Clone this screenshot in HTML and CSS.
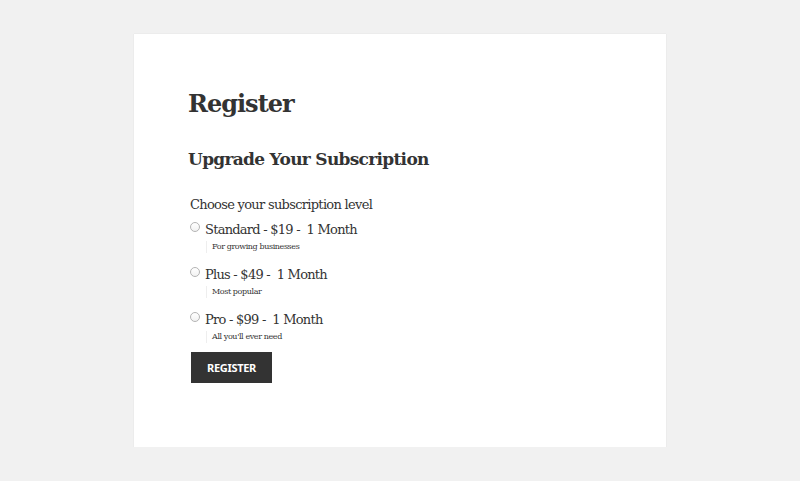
FILE: index.html
```html
<!DOCTYPE html>
<html>
<head>
<meta charset="utf-8">
<link rel="stylesheet" href="styles.css">
</head>
<body>
<main class="card">
  <h1 class="title">Register</h1>
  <h2 class="subtitle">Upgrade Your Subscription</h2>
  <form class="form">
    <p class="legend">Choose your subscription level</p>
    <div class="levels">
      <div class="level">
        <label class="option"><span class="radio"></span>Standard - $19 -&nbsp; 1 Month</label>
        <div class="desc">For growing businesses</div>
      </div>
      <div class="level">
        <label class="option"><span class="radio"></span>Plus - $49 -&nbsp; 1 Month</label>
        <div class="desc">Most popular</div>
      </div>
      <div class="level">
        <label class="option"><span class="radio"></span>Pro - $99 -&nbsp; 1 Month</label>
        <div class="desc">All you'll ever need</div>
      </div>
    </div>
    <button type="button" class="btn">Register</button>
  </form>
</main>
</body>
</html>
```
FILE: styles.css
```css
html, body {
  margin: 0;
  padding: 0;
  background: #f1f1f1;
}
body {
  font-family: "DejaVu Serif", "Liberation Serif", serif;
  color: #333;
  padding-top: 34px;
}
.card {
  width: 532px;
  height: 413px;
  box-sizing: border-box;
  margin: 0 auto;
  background: #fff;
  box-shadow: 0 0 1px rgba(0,0,0,0.12);
  padding: 55px 54px 0 54px;
}
.title {
  margin: 0;
  font-size: 24px;
  line-height: 30px;
  font-weight: bold;
  letter-spacing: -1px;
}
.subtitle {
  margin: 28px 0 0 0;
  font-size: 17px;
  line-height: 24px;
  font-weight: bold;
  letter-spacing: -0.7px;
}
.form {
  margin-top: 25px;
  padding-left: 2px;
  display: flex;
  flex-direction: column;
  align-items: flex-start;
}
.legend {
  margin: 0 0 7px 0;
  font-size: 13px;
  line-height: 18px;
  letter-spacing: -0.7px;
}
.levels {
  display: flex;
  flex-direction: column;
  gap: 13px;
}
.option {
  display: flex;
  align-items: flex-start;
  font-size: 13px;
  line-height: 18px;
  letter-spacing: -0.75px;
}
.radio {
  flex: none;
  width: 8px;
  height: 8px;
  border: 1px solid #b4b4b4;
  border-radius: 50%;
  margin: 1px 5px 0 0;
  background: linear-gradient(#fff, #f2f2f2);
}
.desc {
  margin: 2px 0 0 16px;
  border-left: 1px solid #eee;
  padding-left: 5px;
  font-size: 8px;
  line-height: 12px;
  letter-spacing: -0.4px;
  color: #333;
}
.btn {
  margin: 9px 0 0 1px;
  width: 81px;
  height: 31px;
  border: 0;
  background: #333;
  color: #fff;
  font-family: "Noto Sans", "Open Sans", sans-serif;
  font-weight: bold;
  font-size: 11px;
  text-transform: uppercase;
  letter-spacing: -0.3px;
  padding: 0;
  cursor: pointer;
}
```
